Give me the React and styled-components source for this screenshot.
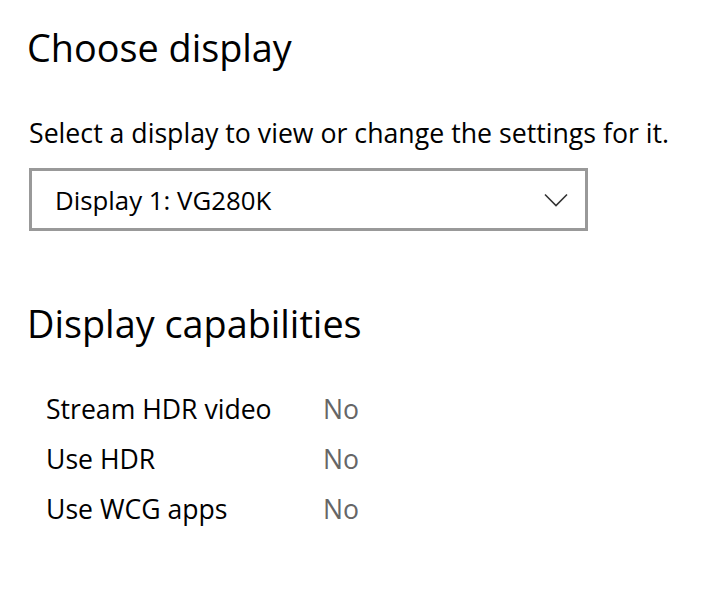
import React from "react";
import styled, { createGlobalStyle } from "styled-components";

const GlobalStyle = createGlobalStyle`
  html, body {
    margin: 0;
    padding: 0;
    background: #ffffff;
  }
  body {
    font-family: "Open Sans", "Noto Sans", sans-serif;
    color: #000000;
  }
`;

const Page = styled.div`
  width: 727px;
  height: 591px;
  padding: 26px 0 0 27px;
  box-sizing: border-box;
  overflow: hidden;
`;

const Heading = styled.h2`
  margin: 0;
  margin-top: ${(p) => p.$top || 0}px;
  font-size: 37.8px;
  line-height: 44px;
  font-weight: 400;
  white-space: nowrap;
`;

const Hint = styled.p`
  margin: 46px 0 0 2px;
  font-size: 26.7px;
  line-height: 34px;
  white-space: nowrap;
`;

const Select = styled.div`
  margin: 18px 0 0 2px;
  width: 559px;
  height: 63px;
  box-sizing: border-box;
  border: 3px solid #999999;
  display: flex;
  align-items: center;
  justify-content: space-between;
  padding: 0 17px 0 23px;
  font-size: 25.8px;
`;

const Chevron = () => (
  <svg width="24" height="14" viewBox="0 0 24 14" fill="none">
    <path d="M1 1.5 L12 12.5 L23 1.5" stroke="#333" strokeWidth="1.6" />
  </svg>
);

const CapList = styled.div`
  margin: 38px 0 0 19px;
  display: flex;
  flex-direction: column;
`;

const CapRow = styled.div`
  display: grid;
  grid-template-columns: 277px auto;
  height: 50px;
  line-height: 50px;
  font-size: 26.6px;
`;

const CapValue = styled.span`
  color: #666666;
`;

const capabilities = [
  { label: "Stream HDR video", value: "No" },
  { label: "Use HDR", value: "No" },
  { label: "Use WCG apps", value: "No" },
];

export default function App() {
  return (
    <>
      <GlobalStyle />
      <Page>
        <Heading>Choose display</Heading>
        <Hint>Select a display to view or change the settings for it.</Hint>
        <Select>
          <span>Display 1: VG280K</span>
          <Chevron />
        </Select>
        <Heading $top={71}>Display capabilities</Heading>
        <CapList>
          {capabilities.map((c) => (
            <CapRow key={c.label}>
              <span>{c.label}</span>
              <CapValue>{c.value}</CapValue>
            </CapRow>
          ))}
        </CapList>
      </Page>
    </>
  );
}
